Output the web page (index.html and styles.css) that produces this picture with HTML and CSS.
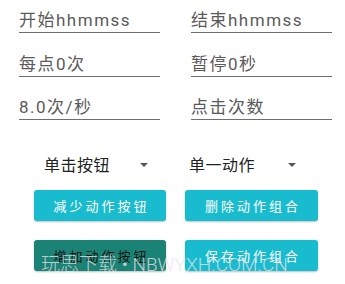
FILE: index.html
```html
<!DOCTYPE html>
<html lang="zh-CN">
<head>
    <meta charset="UTF-8">
    <meta name="viewport" content="width=device-width, initial-scale=1.0">
    <title>连点器设置</title>
    <link rel="stylesheet" href="styles.css">
</head>
<body>
    <div class="page">

        <!-- Input fields -->
        <div class="fields">
            <div class="field">开始hhmmss</div>
            <div class="field">结束hhmmss</div>
            <div class="field">每点0次</div>
            <div class="field">暂停0秒</div>
            <div class="field">8.0次/秒</div>
            <div class="field">点击次数</div>
        </div>

        <!-- Spinners -->
        <div class="spinners">
            <div class="spinner spinner--left">
                <span>单击按钮</span>
                <span class="spinner__arrow"></span>
            </div>
            <div class="spinner spinner--right">
                <span>单一动作</span>
                <span class="spinner__arrow"></span>
            </div>
        </div>

        <!-- Action buttons -->
        <div class="actions">
            <button class="btn">减少动作按钮</button>
            <button class="btn">删除动作组合</button>
            <button class="btn btn--pressed">增加动作按钮</button>
            <button class="btn">保存动作组合</button>
        </div>

        <div class="watermark">玩思下载 • NBWYXH.COM.CN</div>
    </div>
</body>
</html>
```

FILE: styles.css
```css
body {
    margin: 0;
    padding: 0;
    background-color: #ffffff;
    font-family: Roboto, "Noto Sans CJK SC", sans-serif;
}

.page {
    position: relative;
    width: 345px;
    height: 284px;
    overflow: hidden;
}

/* Input fields */
.fields {
    display: grid;
    grid-template-columns: 141px 141px;
    column-gap: 31px;
    row-gap: 20.5px;
    padding: 10px 13px 0 19px;
}

.field {
    font-size: 17px;
    line-height: 20px;
    letter-spacing: 1.5px;
    color: #5a5a5a;
    padding-bottom: 2px;
    border-bottom: 1px solid #6e6e6e;
    white-space: nowrap;
}

/* Spinners */
.spinners {
    display: flex;
    margin-top: 36px;
}

.spinner {
    display: flex;
    justify-content: space-between;
    align-items: center;
    font-size: 16px;
    line-height: 20px;
    letter-spacing: 0.5px;
    color: #222;
}

.spinner--left {
    margin-left: 44px;
    width: 104px;
}

.spinner--right {
    margin-left: 41px;
    width: 107px;
}

.spinner__arrow {
    width: 0;
    height: 0;
    border-left: 4px solid transparent;
    border-right: 4px solid transparent;
    border-top: 4px solid #555;
    margin-bottom: 2px;
}

/* Buttons */
.actions {
    display: grid;
    grid-template-columns: 132px 133px;
    column-gap: 19px;
    row-gap: 19px;
    margin-top: 14px;
    padding-left: 34px;
}

.btn {
    height: 31px;
    border: none;
    border-radius: 3px;
    background-color: #19bbce;
    color: #ffffff;
    font-family: Roboto, "Noto Sans CJK SC", sans-serif;
    font-size: 13px;
    letter-spacing: 3px;
    text-indent: 3px;
    box-shadow: 0 1px 2px rgba(0, 0, 0, 0.25);
    padding: 0;
}

.btn--pressed {
    background-color: #1b8375;
    color: #141414;
}

/* Watermark over the lower buttons */
.watermark {
    position: absolute;
    left: 41px;
    top: 249px;
    font-size: 19px;
    font-weight: 300;
    color: rgba(232, 228, 236, 0.8);
    white-space: nowrap;
    pointer-events: none;
}
```
